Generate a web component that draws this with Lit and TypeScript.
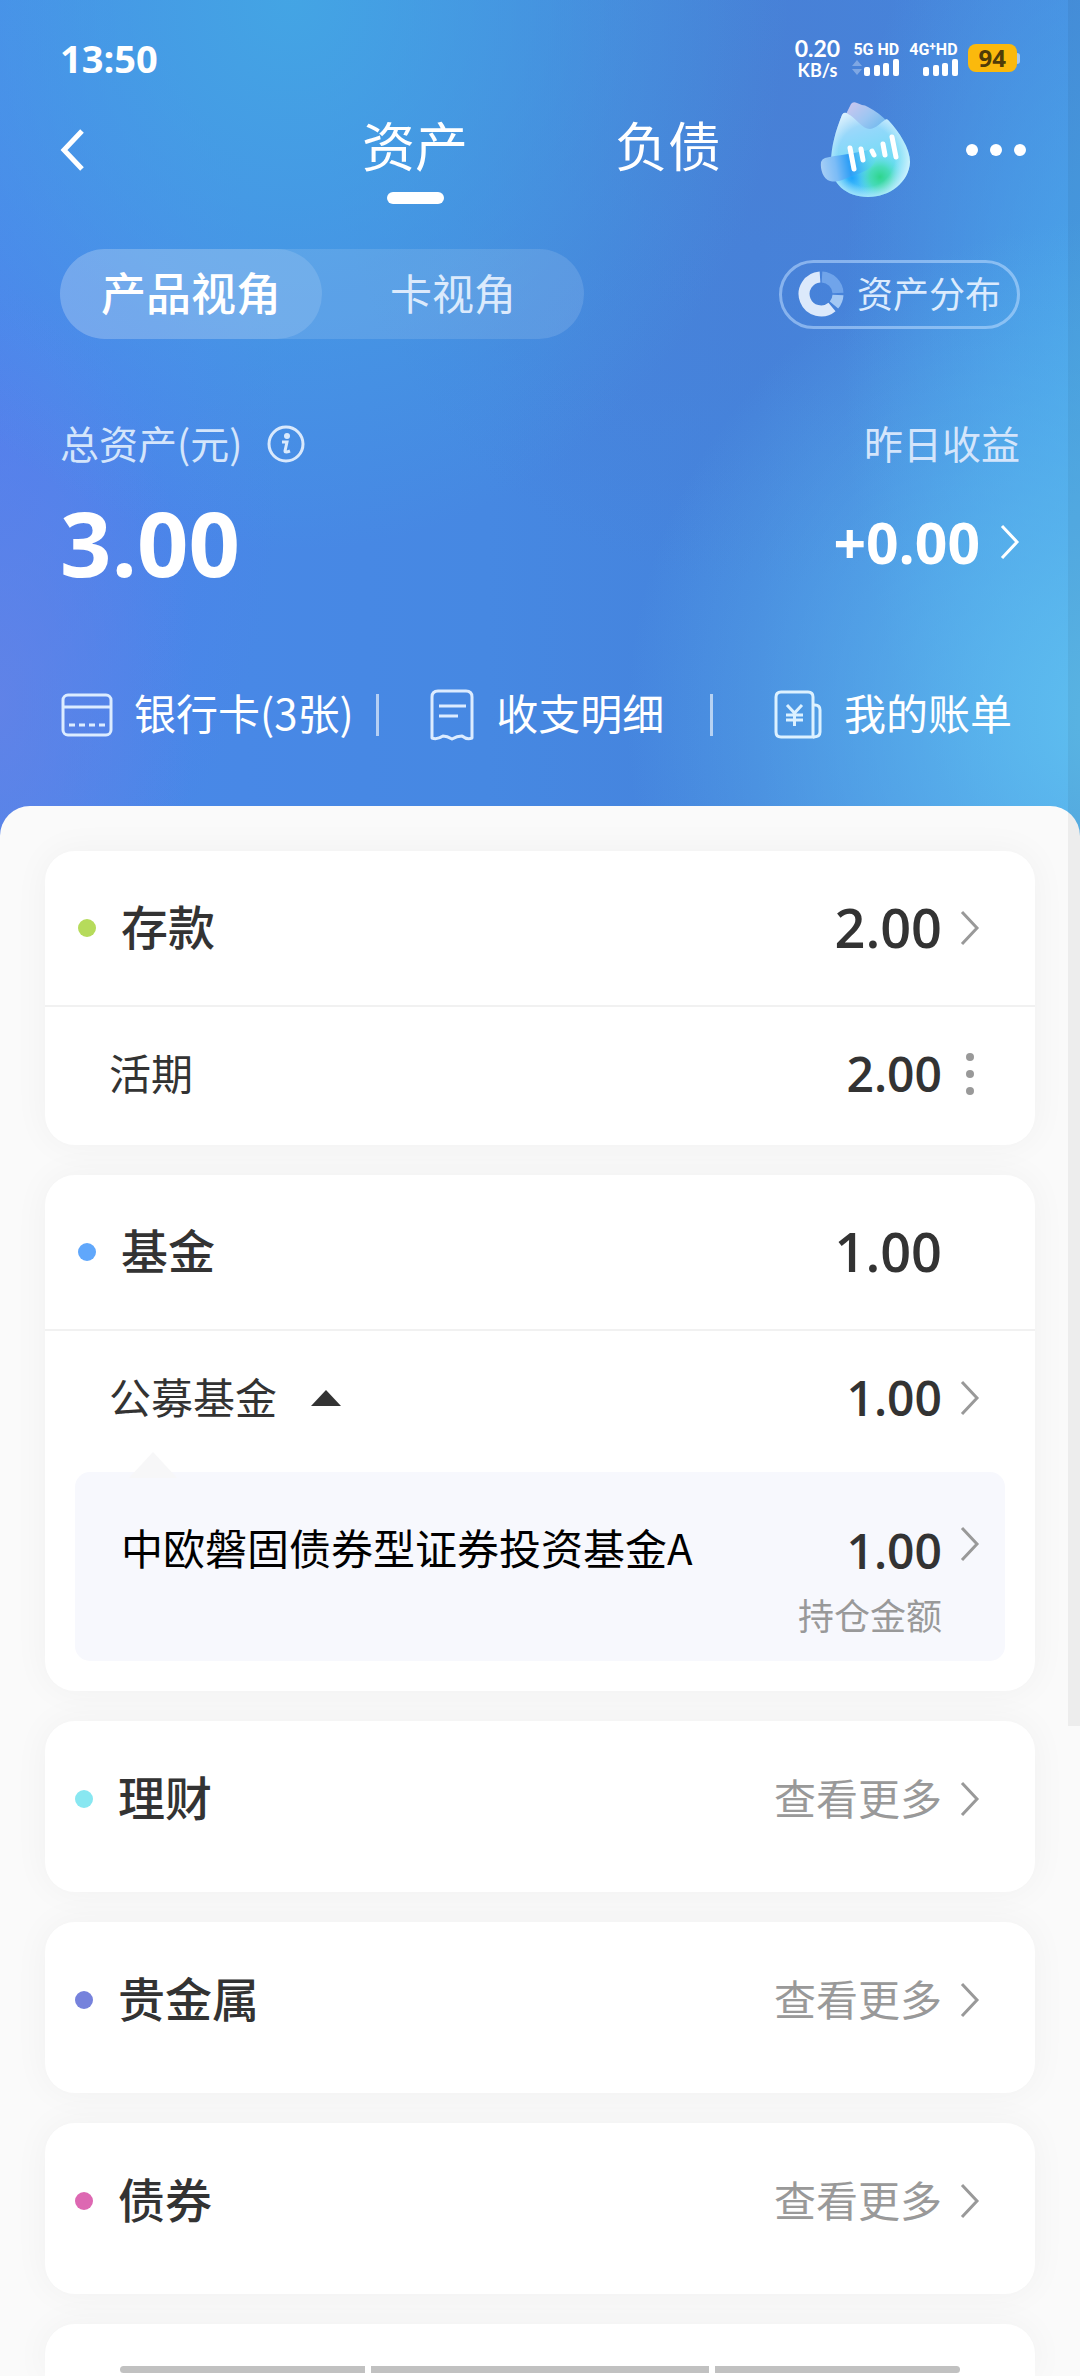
import { LitElement, html, css, svg } from "lit";
import { customElement, property, state } from "lit/decorators.js";
import { classMap } from "lit/directives/class-map.js";

const chevron = html`<svg class="chevron" viewBox="0 0 20 36" aria-hidden="true">
  <path d="M2 2 17 18 2 34" fill="none" stroke="currentColor" stroke-width="3" />
</svg>`;

const signalBars = svg`
  <rect x="12" y="8" width="6" height="9" rx="2" />
  <rect x="22" y="6" width="6" height="11" rx="2" />
  <rect x="31" y="4" width="6" height="13" rx="2" />
  <rect x="41" y="0" width="6" height="17" rx="2" />`;

@customElement("status-bar")
export class StatusBar extends LitElement {
  static styles = css`
    :host {
      display: flex;
      justify-content: space-between;
      align-items: center;
      height: 44px;
      padding: 36px 60px 0;
      font-family: "Open Sans", "Noto Sans", sans-serif;
      font-weight: 600;
      color: #fff;
    }
    .time {
      font-size: 38px;
      font-weight: 700;
      line-height: 44px;
    }
    .icons {
      display: flex;
      align-items: center;
      gap: 10px;
    }
    .speed {
      display: flex;
      flex-direction: column;
      align-items: center;
      margin-right: 2px;
      font-family: Lato, sans-serif;
      font-weight: 700;
      font-size: 18px;
      line-height: 20px;
    }
    .rate {
      font-size: 23px;
      line-height: 24px;
    }
    .network {
      display: flex;
      flex-direction: column;
      align-items: flex-end;
      font-family: Roboto, sans-serif;
      font-weight: 700;
      font-size: 16px;
      line-height: 18px;
      white-space: nowrap;
    }
    .plus {
      font-size: 12px;
      line-height: 12px;
      vertical-align: 4px;
    }
    .bars {
      width: 47px;
      height: 17px;
      fill: currentColor;
    }
    .battery {
      display: flex;
      align-items: center;
    }
    .level {
      padding: 0 11px;
      border-radius: 8px;
      background: #fbb90c;
      color: #503c08;
      font-weight: 700;
      font-size: 24px;
      line-height: 28px;
    }
    .tip {
      width: 3px;
      height: 11px;
      border-radius: 0 3px 3px 0;
      background: #a9c8ee;
    }
  `;

  render() {
    return html`
      <span class="time">13:50</span>
      <div class="icons">
        <div class="speed"><span class="rate">0.20</span><span>KB/s</span></div>
        <div class="network">
          <span>5G HD</span>
          <svg class="bars" viewBox="0 0 47 17">
            <path d="M0 7 5 1 10 7zM0 10 5 16 10 10z" opacity=".3" />
            ${signalBars}
          </svg>
        </div>
        <div class="network">
          <span>4G<span class="plus">+</span>HD</span>
          <svg class="bars" viewBox="0 0 47 17">${signalBars}</svg>
        </div>
        <div class="battery"><span class="level">94</span><span class="tip"></span></div>
      </div>
    `;
  }
}

@customElement("petal-logo")
export class PetalLogo extends LitElement {
  static styles = css`
    :host {
      display: block;
      width: 94px;
      height: 100px;
    }
  `;

  render() {
    return html`<svg viewBox="0 0 94 100" width="94" height="100">
      <defs>
        <linearGradient id="back" x1="0" y1="0" x2="1" y2="1">
          <stop offset="0" stop-color="#d0c6ee" />
          <stop offset=".45" stop-color="#9cc6f2" />
          <stop offset="1" stop-color="#4fb0ea" />
        </linearGradient>
        <linearGradient id="body" x1=".3" y1="0" x2=".6" y2="1">
          <stop offset="0" stop-color="#c4d8f6" />
          <stop offset=".35" stop-color="#93d8fb" />
          <stop offset=".7" stop-color="#6fdcf4" />
          <stop offset="1" stop-color="#5fd0f8" />
        </linearGradient>
        <radialGradient id="edge" cx=".45" cy=".52" r=".55">
          <stop offset=".65" stop-color="#e2f7ff" stop-opacity="0" />
          <stop offset="1" stop-color="#e2f7ff" stop-opacity=".8" />
        </radialGradient>
        <radialGradient id="green">
          <stop offset="0" stop-color="#2ed58c" />
          <stop offset=".45" stop-color="#3fdcaa" stop-opacity=".8" />
          <stop offset="1" stop-color="#55e0e0" stop-opacity="0" />
        </radialGradient>
        <radialGradient id="blue">
          <stop offset="0" stop-color="#1fa4fb" />
          <stop offset="1" stop-color="#3fb8fb" stop-opacity="0" />
        </radialGradient>
        <linearGradient id="leaf" x1="0" y1=".4" x2="1" y2=".3">
          <stop offset="0" stop-color="#a4cdf5" />
          <stop offset=".25" stop-color="#7cbcf6" />
          <stop offset=".5" stop-color="#2f9ff6" />
          <stop offset="1" stop-color="#5fdcf0" stop-opacity=".4" />
        </linearGradient>
        <clipPath id="shape">
          <path d="M24 15Q26 11 30 14C38 18 44 29 52 29 59 28 62 23 67 20Q69 18 71 21C81 32 92 48 92 62 91 82 72 97 50 97 28 97 13 83 13 64 13 46 18 30 24 15Z" />
        </clipPath>
      </defs>
      <path fill="url(#back)" d="M28 14 33 4Q35 1 39 3L44 5Q47 5 50 7C58 11 64 16 70 22L60 40 36 34Z" />
      <g clip-path="url(#shape)">
        <rect width="94" height="100" fill="url(#body)" />
        <circle cx="34" cy="78" r="24" fill="url(#blue)" />
        <circle cx="62" cy="77" r="23" fill="url(#green)" />
        <rect x="13" y="11" width="79" height="86" fill="url(#edge)" />
      </g>
      <path fill="url(#leaf)" d="M7 58C18 55 38 54 53 49Q58 49 58 57C58 69 42 73 34 76 26 79 20 83 12 81 5 79 2 69 3 62Q4 59 7 58Z" />
      <g stroke="#fff" stroke-width="5" stroke-linecap="round">
        <path d="M32 48 36 69" />
        <path d="M43 49 45 60" />
        <path d="M54 51 56 55" />
        <path d="M65 44 67 55" />
        <path d="M74 37 78 57" />
      </g>
    </svg>`;
  }
}

@customElement("app-header")
export class AppHeader extends LitElement {
  @state() private view = 0;

  static styles = css`
    :host {
      display: block;
      padding-bottom: 91px;
      color: #fff;
      background:
        radial-gradient(ellipse 46% 66% at 27% 0%, rgba(67, 166, 228, 0.95) 0%, rgba(67, 166, 228, 0) 100%),
        radial-gradient(ellipse 18% 50% at 0% 84%, rgba(102, 130, 230, 0.75) 0%, rgba(90, 130, 236, 0) 100%),
        radial-gradient(ellipse 26% 60% at 0% 54%, rgba(80, 126, 238, 0.75) 0%, rgba(80, 126, 238, 0) 100%),
        radial-gradient(ellipse 46% 60% at 104% 86%, #5fc0f0 0%, rgba(84, 178, 240, 0) 100%),
        radial-gradient(ellipse 26% 70% at 104% 40%, #4aa6ea 0%, rgba(74, 166, 234, 0) 100%),
        radial-gradient(ellipse 40% 60% at 70% 10%, #4880d6 0%, rgba(72, 128, 214, 0) 100%),
        linear-gradient(90deg, #4a88ea 0%, #4688e2 45%, #4583dc 70%, #478ce2 100%);
    }
    button {
      padding: 0;
      border: 0;
      background: none;
      font: inherit;
      color: inherit;
    }
    a {
      color: inherit;
      text-decoration: none;
    }
    svg {
      display: block;
      flex: none;
    }
    .nav {
      display: grid;
      grid-template-columns: 1fr auto 1fr;
      align-items: center;
      height: 108px;
      margin-top: 16px;
      padding: 0 54px 0 60px;
    }
    .back {
      justify-self: start;
    }
    .tabs {
      display: flex;
      gap: 147px;
      align-self: end;
      margin-left: -3px;
    }
    .tab {
      display: flex;
      flex-direction: column;
      align-items: center;
      gap: 22px;
      font-size: 53px;
      line-height: 52px;
      height: 86px;
    }
    .tab.on::after {
      content: "";
      width: 57px;
      height: 12px;
      border-radius: 6px;
      background: #fff;
    }
    .tools {
      display: flex;
      align-items: center;
      justify-content: flex-end;
      gap: 54px;
    }
    .views,
    .labels,
    .values {
      display: flex;
      justify-content: space-between;
      align-items: center;
      padding: 0 60px;
    }
    .views {
      margin-top: 45px;
    }
    .switch {
      display: flex;
      border-radius: 45px;
      background: rgba(255, 255, 255, 0.12);
    }
    .view {
      width: 262px;
      height: 90px;
      border-radius: 45px;
      font-size: 42px;
      line-height: 86px;
      padding-bottom: 4px;
      color: #dbeafc;
    }
    .view.on {
      background: rgba(255, 255, 255, 0.13);
      font-size: 45px;
      font-weight: 500;
      color: #fff;
    }
    .spread {
      display: flex;
      align-items: center;
      gap: 13px;
      height: 69px;
      padding: 0 16px;
      border: 3px solid rgba(190, 220, 255, 0.55);
      border-radius: 35px;
      font-size: 36px;
      line-height: 60px;
      color: #dcebfd;
    }
    .spread-text {
      padding-bottom: 4px;
    }
    .labels {
      margin-top: 75px;
      font-size: 39px;
      line-height: 56px;
      color: #d4e5fb;
    }
    .total-label {
      display: flex;
      align-items: center;
      gap: 24px;
    }
    .info {
      padding-top: 4px;
    }
    .values {
      margin-top: 26px;
      font-family: "Open Sans", "Noto Sans", sans-serif;
      font-weight: 700;
    }
    .total {
      font-size: 90px;
      line-height: 92px;
    }
    .gain {
      display: flex;
      align-items: center;
      gap: 20px;
      font-size: 57px;
      line-height: 92px;
    }
    .chevron {
      width: 20px;
      height: 36px;
    }
    .shortcuts {
      display: grid;
      grid-template-columns: auto 3px 1fr 3px auto;
      align-items: center;
      margin-top: 97px;
      padding: 0 68px 0 60px;
    }
    .divider {
      height: 42px;
      background: rgba(255, 255, 255, 0.6);
    }
    .shortcut {
      display: flex;
      align-items: center;
      justify-content: center;
      gap: 20px;
      padding: 0 22px 0 0;
      font-size: 42px;
      line-height: 60px;
      white-space: nowrap;
    }
    .shortcut.mid {
      padding: 0 0 0 4px;
    }
    .shortcut.last {
      padding: 0 0 0 60px;
    }
    .shortcut-text {
      line-height: 54px;
      padding-bottom: 6px;
    }
  `;

  private viewButton(index: number, label: string) {
    const on = this.view === index;
    return html`<button
      class=${classMap({ view: true, on })}
      aria-pressed=${on ? "true" : "false"}
      @click=${() => (this.view = index)}
    >${label}</button>`;
  }

  render() {
    return html`
      <status-bar></status-bar>
      <nav class="nav">
        <button class="back" aria-label="返回">
          <svg width="26" height="42" viewBox="0 0 26 42">
            <path d="M22 2 4 21 22 40" fill="none" stroke="#fff" stroke-width="5" />
          </svg>
        </button>
        <div class="tabs">
          <button class="tab on">资产</button>
          <button class="tab">负债</button>
        </div>
        <div class="tools">
          <petal-logo></petal-logo>
          <button aria-label="更多">
            <svg width="60" height="12" viewBox="0 0 60 12" fill="#fff">
              <circle cx="6" cy="6" r="6" />
              <circle cx="30" cy="6" r="6" />
              <circle cx="54" cy="6" r="6" />
            </svg>
          </button>
        </div>
      </nav>

      <div class="views">
        <div class="switch">${this.viewButton(0, "产品视角")}${this.viewButton(1, "卡视角")}</div>
        <button class="spread">
          <svg width="46" height="46" viewBox="0 0 46 46" fill="none" stroke-width="11">
            <path d="M22 6A17 17 0 1 0 34 36" stroke="#dce9fb" />
            <path d="M36 34A17 17 0 0 0 40 24" stroke="#a3c8f4" />
            <path d="M24 6A17 17 0 0 1 40 22" stroke="#70a4ea" />
          </svg>
          <span class="spread-text">资产分布</span>
        </button>
      </div>

      <div class="labels">
        <div class="total-label">
          <span>总资产(元)</span>
          <button class="info" aria-label="说明">
            <svg width="40" height="40" viewBox="0 0 40 40" fill="none" stroke="#d9e9fc" stroke-width="3">
              <circle cx="20" cy="20" r="17" />
              <circle cx="21" cy="12" r="3" fill="#d9e9fc" stroke="none" />
              <path d="M16 18H21L19 27Q19 29 24 27" />
            </svg>
          </button>
        </div>
        <span>昨日收益</span>
      </div>
      <div class="values">
        <span class="total">3.00</span>
        <a class="gain" href="#gain">+0.00 ${chevron}</a>
      </div>

      <div class="shortcuts">
        <a class="shortcut" href="#cards">
          <svg width="54" height="48" viewBox="0 0 54 48" fill="none" stroke="#dcecff" stroke-width="3">
            <rect x="3" y="4" width="48" height="40" rx="5" />
            <path d="M3 16H51" />
            <path d="M9 34H46" stroke-dasharray="6 4" />
          </svg>
          <span class="shortcut-text">银行卡(3张)</span>
        </a>
        <span class="divider"></span>
        <a class="shortcut mid" href="#details">
          <svg width="48" height="54" viewBox="0 0 48 54" fill="none" stroke="#dcecff" stroke-width="3" stroke-linejoin="round">
            <path d="M4 50V9Q4 3 10 3H38Q44 3 44 9V50Q39 52 34 48 29 48 24 51 19 48 15 48 9 52 4 50Z" />
            <path d="M11 18H38M11 28H30" />
          </svg>
          <span class="shortcut-text">收支明细</span>
        </a>
        <span class="divider"></span>
        <a class="shortcut last" href="#bills">
          <svg width="51" height="52" viewBox="0 0 51 52" fill="none" stroke="#dcf1ff" stroke-width="3">
            <path d="M40 48H8Q3 48 3 43V8Q3 3 8 3H35Q40 3 40 8Z" />
            <path d="M40 16H42Q47 16 47 21V43Q47 48 40 48" />
            <path d="M14 16 21.5 24 29 16M13 26H30M13 31H30M21.5 24V37" />
          </svg>
          <span class="shortcut-text">我的账单</span>
        </a>
      </div>
    `;
  }
}

type Category = { name: string; tone: string; amount?: string; link?: boolean };

@customElement("asset-card")
export class AssetCard extends LitElement {
  @property({ attribute: false }) category!: Category;

  static styles = css`
    :host {
      display: block;
      border-radius: 30px;
      background: #fff;
      box-shadow: 0 0 36px rgba(0, 0, 0, 0.045);
      color: #333;
    }
    .head {
      display: flex;
      align-items: center;
      height: 154px;
      padding: 0 55px 0 33px;
      color: inherit;
      text-decoration: none;
    }
    .head.ruled {
      border-bottom: 2px solid #f1f1f1;
    }
    .head.brief {
      height: 156px;
      padding: 0 55px 15px 30px;
    }
    .dot {
      width: 18px;
      height: 18px;
      border-radius: 50%;
      margin-right: 25px;
    }
    .green { background: #b6db5b; }
    .blue { background: #60a7fb; }
    .cyan { background: #88e7f1; }
    .indigo { background: #7682dc; }
    .pink { background: #dd68b2; }
    .name {
      flex: 1;
      margin: 0;
      padding-bottom: 6px;
      font-weight: 500;
      font-size: 47px;
      line-height: 60px;
    }
    .amount {
      font-family: "Open Sans", "Noto Sans", sans-serif;
      font-weight: 600;
      font-size: 54px;
      line-height: 60px;
      padding-bottom: 2px;
    }
    .more {
      padding-bottom: 5px;
      font-size: 42px;
      line-height: 60px;
      color: #999;
    }
    .chevron {
      flex: none;
      width: 20px;
      height: 36px;
      margin-left: 18px;
      color: #999;
    }
    .blank {
      width: 38px;
    }
  `;

  render() {
    const { name, tone, amount, link } = this.category;
    return html`
      <a class=${classMap({ head: true, ruled: !!amount, brief: !amount })} href="#category">
        <span class="dot ${tone}"></span>
        <h2 class="name">${name}</h2>
        ${amount ? html`<span class="amount">${amount}</span>` : html`<span class="more">查看更多</span>`}
        ${link === false ? html`<span class="blank"></span>` : chevron}
      </a>
      <slot></slot>
    `;
  }
}

@customElement("app-root")
export class AppRoot extends LitElement {
  private brief: Category[] = [
    { name: "理财", tone: "cyan" },
    { name: "贵金属", tone: "indigo" },
    { name: "债券", tone: "pink" },
  ];

  static styles = css`
    :host {
      display: flex;
      flex-direction: column;
      position: relative;
      min-height: 100vh;
      overflow: hidden;
      background: #fafafa;
      font-family: "Noto Sans CJK SC", sans-serif;
    }
    .sheet {
      flex: 1;
      display: flex;
      flex-direction: column;
      gap: 30px;
      position: relative;
      margin-top: -30px;
      padding: 45px 45px 0;
      border-radius: 30px 30px 0 0;
      background: #fafafa;
    }
    .row {
      display: flex;
      align-items: center;
      height: 134px;
      padding: 0 55px 4px 64px;
      color: #333;
      text-decoration: none;
      font-size: 42px;
      line-height: 60px;
    }
    .label {
      flex: 1;
      display: flex;
      align-items: center;
      gap: 33px;
      padding-bottom: 5px;
    }
    .toggle {
      padding: 4px 0 0;
      border: 0;
      background: none;
    }
    svg {
      display: block;
      flex: none;
    }
    .amount {
      font-family: "Open Sans", "Noto Sans", sans-serif;
      font-weight: 600;
      font-size: 48px;
      line-height: 60px;
      color: #333;
    }
    .chevron {
      width: 20px;
      height: 36px;
      margin-left: 18px;
      color: #999;
    }
    .menu {
      padding: 0;
      border: 0;
      background: none;
      margin-left: 18px;
    }
    .holding {
      position: relative;
      display: grid;
      grid-template-columns: 1fr auto auto;
      align-items: center;
      margin: 3px 30px 30px;
      padding: 45px 25px 8px 46px;
      border-radius: 15px;
      background: #f7f8fd;
      color: #000;
      text-decoration: none;
      font-size: 42px;
      line-height: 60px;
    }
    .pointer {
      position: absolute;
      left: 54px;
      top: -20px;
    }
    .fund {
      padding-bottom: 4px;
    }
    .holding .amount {
      padding-top: 4px;
    }
    .holding .chevron {
      margin-bottom: 10px;
    }
    .note {
      grid-column: 1 / 3;
      text-align: right;
      font-size: 36px;
      line-height: 66px;
      padding-bottom: 6px;
      color: #999;
    }
    .next {
      flex: 1;
      min-height: 50px;
      border-radius: 30px 30px 0 0;
      background: #fff;
      box-shadow: 0 0 36px rgba(0, 0, 0, 0.045);
    }
    .scrollbar {
      position: absolute;
      top: 0;
      right: 0;
      width: 12px;
      height: 1726px;
      background: rgba(0, 0, 0, 0.05);
    }
    .gestures {
      position: absolute;
      left: 120px;
      right: 120px;
      bottom: 3px;
      display: grid;
      grid-template-columns: 245fr 338fr 245fr;
      gap: 6px;
    }
    .gesture {
      height: 7px;
      background: #c1c1c1;
    }
    .gesture:first-child {
      border-radius: 4px 0 0 4px;
    }
    .gesture:last-child {
      border-radius: 0 4px 4px 0;
    }
  `;

  render() {
    return html`
      <app-header></app-header>
      <main class="sheet">
        <asset-card .category=${{ name: "存款", tone: "green", amount: "2.00" }}>
          <div class="row">
            <span class="label">活期</span>
            <span class="amount">2.00</span>
            <button class="menu" aria-label="更多操作">
              <svg width="20" height="44" viewBox="0 0 20 44" fill="#999">
                <circle cx="10" cy="5" r="4" />
                <circle cx="10" cy="22" r="4" />
                <circle cx="10" cy="39" r="4" />
              </svg>
            </button>
          </div>
        </asset-card>

        <asset-card .category=${{ name: "基金", tone: "blue", amount: "1.00", link: false }}>
          <div class="row">
            <span class="label">公募基金
              <button class="toggle" aria-label="收起">
                <svg width="32" height="16" viewBox="0 0 32 16"><path d="M1 16 16 0 31 16Z" fill="#333" /></svg>
              </button>
            </span>
            <span class="amount">1.00</span>
            ${chevron}
          </div>
          <a class="holding" href="#fund">
            <svg class="pointer" width="48" height="26" viewBox="0 0 48 26"><path d="M0 26 24 0 48 26Z" fill="#f7f7f8" /></svg>
            <span class="fund">中欧磐固债券型证券投资基金A</span>
            <span class="amount">1.00</span>
            ${chevron}
            <span class="note">持仓金额</span>
          </a>
        </asset-card>

        ${this.brief.map((category) => html`<asset-card .category=${category}></asset-card>`)}
        <div class="next"></div>
      </main>
      <div class="scrollbar"></div>
      <div class="gestures">
        <span class="gesture"></span><span class="gesture"></span><span class="gesture"></span>
      </div>
    `;
  }
}
